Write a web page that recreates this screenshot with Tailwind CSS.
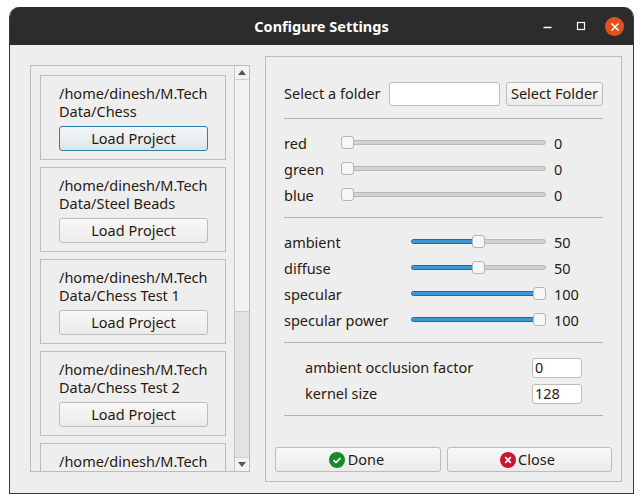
<!DOCTYPE html>
<html lang="en">
<head>
  <meta charset="UTF-8" />
  <title>Configure Settings</title>
  <script src="https://cdn.jsdelivr.net/npm/@tailwindcss/browser@4"></script>
</head>
<body class="bg-white w-[643px] h-[503px] overflow-hidden font-['Noto_Sans',sans-serif] text-[14.5px] text-[#2a1a0e]">

  <!-- window -->
  <div class="ml-[9px] mt-[7px] w-[625px] h-[487px] flex flex-col rounded-t-[10px] overflow-hidden border-x border-b border-[#3a3a3a] bg-[#eeeeee]">

    <!-- title bar -->
    <div class="h-[38px] shrink-0 bg-[#2c2c2c] flex items-center relative -mx-px">
      <div class="w-full text-center text-white font-bold text-[14.5px] leading-none">Configure Settings</div>
      <svg class="absolute left-[533px] top-[11px]" width="12" height="12" viewBox="0 0 12 12"><path d="M1.5 9.5h8" stroke="#fff" stroke-width="1.4"/></svg>
      <svg class="absolute left-[566px] top-[13px]" width="12" height="12" viewBox="0 0 12 12"><rect x="2.5" y="2.5" width="7" height="7" fill="none" stroke="#fff" stroke-width="1.2"/></svg>
      <div class="absolute left-[596px] top-[10px] w-[19px] h-[19px] rounded-full bg-[#e0531f] flex items-center justify-center">
        <svg width="10" height="10" viewBox="0 0 10 10"><path d="M1.5 1.5l7 7M8.5 1.5l-7 7" stroke="#fff" stroke-width="1.5"/></svg>
      </div>
    </div>

    <div class="flex flex-1 min-h-0">
      <!-- project list -->
      <div class="ml-[20px] mt-[20px] w-[220px] h-[407px] border border-[#bcbcbc] flex shrink-0">
        <div class="flex-1 overflow-hidden pl-[9px] pt-[9px] flex flex-col gap-[7px]">
          <div class="w-[186px] h-[85px] shrink-0 border border-[#bcbcbc] pl-[18px] pt-[8px]">
            <div class="leading-[18px]">/home/dinesh/M.Tech<br>Data/Chess</div>
            <button class="mt-[6px] w-[149px] h-[25px] rounded-[3px] border border-[#2f7ea8] bg-linear-to-b from-[#f4f7f9] to-[#dde5ea]">Load Project</button>
          </div>
          <div class="w-[186px] h-[85px] shrink-0 border border-[#bcbcbc] pl-[18px] pt-[8px]">
            <div class="leading-[18px]">/home/dinesh/M.Tech<br>Data/Steel Beads</div>
            <button class="mt-[6px] w-[149px] h-[25px] rounded-[3px] border border-[#bcbcbc] bg-linear-to-b from-[#f8f8f8] to-[#ebebeb]">Load Project</button>
          </div>
          <div class="w-[186px] h-[85px] shrink-0 border border-[#bcbcbc] pl-[18px] pt-[8px]">
            <div class="leading-[18px]">/home/dinesh/M.Tech<br>Data/Chess Test 1</div>
            <button class="mt-[6px] w-[149px] h-[25px] rounded-[3px] border border-[#bcbcbc] bg-linear-to-b from-[#f8f8f8] to-[#ebebeb]">Load Project</button>
          </div>
          <div class="w-[186px] h-[85px] shrink-0 border border-[#bcbcbc] pl-[18px] pt-[8px]">
            <div class="leading-[18px]">/home/dinesh/M.Tech<br>Data/Chess Test 2</div>
            <button class="mt-[6px] w-[149px] h-[25px] rounded-[3px] border border-[#bcbcbc] bg-linear-to-b from-[#f8f8f8] to-[#ebebeb]">Load Project</button>
          </div>
          <div class="w-[186px] h-[85px] shrink-0 border border-[#bcbcbc] pl-[18px] pt-[8px]">
            <div class="leading-[18px]">/home/dinesh/M.Tech</div>
          </div>
        </div>
        <!-- scrollbar -->
        <div class="w-[15px] shrink-0 border-l border-[#c8c8c8] bg-[#e3e3e3] flex flex-col">
          <div class="h-[14px] bg-[#f2f2f2] border-b border-[#cfcfcf] flex items-center justify-center">
            <svg width="8" height="5" viewBox="0 0 8 5"><path d="M4 0l4 5H0z" fill="#555"/></svg>
          </div>
          <div class="h-[232px] bg-[#f1f1f1] border-b border-[#c8c8c8]"></div>
          <div class="flex-1"></div>
          <div class="h-[14px] bg-[#f2f2f2] border-t border-[#cfcfcf] flex items-center justify-center">
            <svg width="8" height="5" viewBox="0 0 8 5"><path d="M4 5l4-5H0z" fill="#555"/></svg>
          </div>
        </div>
      </div>

      <!-- settings panel -->
      <div class="ml-[15px] mt-[11px] w-[357px] h-[426px] border border-[#bcbcbc] shrink-0 flex flex-col">
        <div class="pl-[18px] pr-[18px] pt-[25px]">
          <div class="flex items-center h-[24px]">
            <span class="w-[105px]">Select a folder</span>
            <input class="w-[111px] h-[24px] bg-white border border-[#bcbcbc] rounded-[3px]" />
            <button class="ml-[6px] w-[97px] h-[24px] rounded-[3px] border border-[#bcbcbc] bg-linear-to-b from-[#f8f8f8] to-[#ebebeb]">Select Folder</button>
          </div>
          <div class="mt-[12px] h-px bg-[#b5b5b5]"></div>

          <div class="mt-[14px] flex flex-col gap-[6px]">
            <div class="flex items-center h-[20px]">
              <span class="w-[57px] pt-[2px]">red</span>
              <div class="w-[205px] h-[5px] mb-[2px] relative rounded-full bg-[#d2d2d2] border border-[#b9b9b9]">
                <div class="absolute left-[-1px] top-[-5px] w-[13px] h-[13px] rounded-[3px] bg-[#f6f6f6] border border-[#b5b5b5]"></div>
              </div>
              <span class="ml-[8px] pt-[2px]">0</span>
            </div>
            <div class="flex items-center h-[20px]">
              <span class="w-[57px] pt-[2px]">green</span>
              <div class="w-[205px] h-[5px] mb-[2px] relative rounded-full bg-[#d2d2d2] border border-[#b9b9b9]">
                <div class="absolute left-[-1px] top-[-5px] w-[13px] h-[13px] rounded-[3px] bg-[#f6f6f6] border border-[#b5b5b5]"></div>
              </div>
              <span class="ml-[8px] pt-[2px]">0</span>
            </div>
            <div class="flex items-center h-[20px]">
              <span class="w-[57px] pt-[2px]">blue</span>
              <div class="w-[205px] h-[5px] mb-[2px] relative rounded-full bg-[#d2d2d2] border border-[#b9b9b9]">
                <div class="absolute left-[-1px] top-[-5px] w-[13px] h-[13px] rounded-[3px] bg-[#f6f6f6] border border-[#b5b5b5]"></div>
              </div>
              <span class="ml-[8px] pt-[2px]">0</span>
            </div>
          </div>
          <div class="mt-[12px] h-px bg-[#b5b5b5]"></div>

          <div class="mt-[14px] flex flex-col gap-[6px]">
            <div class="flex items-center h-[20px]">
              <span class="w-[127px] pt-[2px]">ambient</span>
              <div class="w-[135px] h-[5px] mb-[2px] relative rounded-full bg-[#d2d2d2] border border-[#b9b9b9]">
                <div class="h-full w-[65px] rounded-l-full bg-[#3c97d8] outline outline-[#22689a]"></div>
                <div class="absolute left-[60px] top-[-5px] w-[13px] h-[13px] rounded-[3px] bg-[#f6f6f6] border border-[#b5b5b5]"></div>
              </div>
              <span class="ml-[8px] pt-[2px]">50</span>
            </div>
            <div class="flex items-center h-[20px]">
              <span class="w-[127px] pt-[2px]">diffuse</span>
              <div class="w-[135px] h-[5px] mb-[2px] relative rounded-full bg-[#d2d2d2] border border-[#b9b9b9]">
                <div class="h-full w-[65px] rounded-l-full bg-[#3c97d8] outline outline-[#22689a]"></div>
                <div class="absolute left-[60px] top-[-5px] w-[13px] h-[13px] rounded-[3px] bg-[#f6f6f6] border border-[#b5b5b5]"></div>
              </div>
              <span class="ml-[8px] pt-[2px]">50</span>
            </div>
            <div class="flex items-center h-[20px]">
              <span class="w-[127px] pt-[2px]">specular</span>
              <div class="w-[135px] h-[5px] mb-[2px] relative rounded-full bg-[#d2d2d2] border border-[#b9b9b9]">
                <div class="h-full w-[125px] rounded-l-full bg-[#3c97d8] outline outline-[#22689a]"></div>
                <div class="absolute left-[121px] top-[-5px] w-[13px] h-[13px] rounded-[3px] bg-[#f6f6f6] border border-[#b5b5b5]"></div>
              </div>
              <span class="ml-[8px] pt-[2px]">100</span>
            </div>
            <div class="flex items-center h-[20px]">
              <span class="w-[127px] pt-[2px]">specular power</span>
              <div class="w-[135px] h-[5px] mb-[2px] relative rounded-full bg-[#d2d2d2] border border-[#b9b9b9]">
                <div class="h-full w-[125px] rounded-l-full bg-[#3c97d8] outline outline-[#22689a]"></div>
                <div class="absolute left-[121px] top-[-5px] w-[13px] h-[13px] rounded-[3px] bg-[#f6f6f6] border border-[#b5b5b5]"></div>
              </div>
              <span class="ml-[8px] pt-[2px]">100</span>
            </div>
          </div>
          <div class="mt-[12px] h-px bg-[#b5b5b5]"></div>

          <div class="mt-[15px] pl-[21px] flex flex-col gap-[6px]">
            <div class="flex items-center h-[20px]">
              <span class="w-[227px]">ambient occlusion factor</span>
              <input value="0" class="w-[50px] h-[20px] bg-white border border-[#bcbcbc] rounded-[3px] px-[2px]" />
            </div>
            <div class="flex items-center h-[20px]">
              <span class="w-[227px]">kernel size</span>
              <input value="128" class="w-[50px] h-[20px] bg-white border border-[#bcbcbc] rounded-[3px] px-[2px]" />
            </div>
          </div>
          <div class="mt-[11px] h-px bg-[#b5b5b5]"></div>
        </div>

        <div class="mt-[31px] pl-[9px] flex gap-[6px]">
          <button class="w-[166px] h-[25px] pr-[3px] rounded-[3px] border border-[#bcbcbc] bg-linear-to-b from-[#f8f8f8] to-[#ebebeb] flex items-center justify-center gap-[3px]">
            <svg width="16" height="16" viewBox="0 0 16 16"><circle cx="8" cy="8" r="8" fill="#168a2c"/><path d="M4.5 8.2l2.4 2.4 4.6-4.6" fill="none" stroke="#fff" stroke-width="1.7"/></svg>
            Done
          </button>
          <button class="w-[165px] h-[25px] pr-[4px] rounded-[3px] border border-[#bcbcbc] bg-linear-to-b from-[#f8f8f8] to-[#ebebeb] flex items-center justify-center gap-[2px]">
            <svg width="16" height="16" viewBox="0 0 16 16"><circle cx="8" cy="8" r="8" fill="#cc1432"/><path d="M5.2 5.2l5.6 5.6M10.8 5.2l-5.6 5.6" fill="none" stroke="#fff" stroke-width="1.8"/></svg>
            Close
          </button>
        </div>
      </div>
    </div>
  </div>
</body>
</html>
